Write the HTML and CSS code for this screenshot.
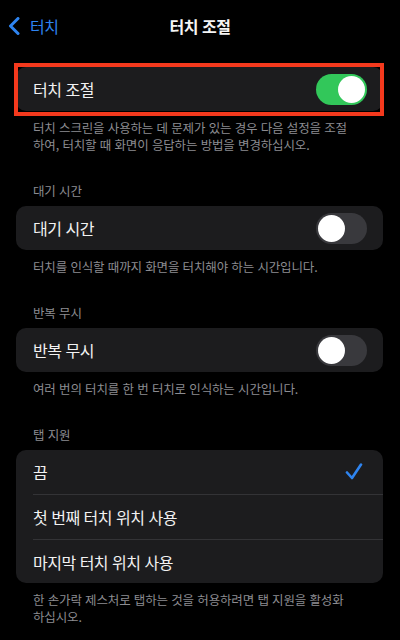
FILE: index.html
```html
<!DOCTYPE html>
<html lang="ko">
<head>
  <meta charset="UTF-8">
  <meta name="viewport" content="width=device-width, initial-scale=1.0">
  <title>터치 조절</title>
  <link rel="stylesheet" href="styles.css">
</head>
<body>
  <div class="screen">
    <header class="navbar">
      <a class="back" href="#">
        <svg width="12" height="18" viewBox="0 0 12 18"><path d="M10 1.5 L2.5 9 L10 16.5" fill="none" stroke="currentColor" stroke-width="3" stroke-linecap="round" stroke-linejoin="round"/></svg>
        <span>터치</span>
      </a>
      <h1 class="title">터치 조절</h1>
      <span></span>
    </header>

    <!-- main switch -->
    <section class="group first">
      <div class="cells highlighted">
        <div class="cell">
          <div class="cell-body">
            <span class="label">터치 조절</span>
            <span class="switch on"><span class="knob"></span></span>
          </div>
        </div>
      </div>
      <p class="footer">터치 스크린을 사용하는 데 문제가 있는 경우 다음 설정을 조절하여, 터치할 때 화면이 응답하는 방법을 변경하십시오.</p>
    </section>

    <section class="group">
      <h2 class="header">대기 시간</h2>
      <div class="cells">
        <div class="cell">
          <div class="cell-body">
            <span class="label">대기 시간</span>
            <span class="switch"><span class="knob"></span></span>
          </div>
        </div>
      </div>
      <p class="footer">터치를 인식할 때까지 화면을 터치해야 하는 시간입니다.</p>
    </section>

    <section class="group">
      <h2 class="header">반복 무시</h2>
      <div class="cells">
        <div class="cell">
          <div class="cell-body">
            <span class="label">반복 무시</span>
            <span class="switch"><span class="knob"></span></span>
          </div>
        </div>
      </div>
      <p class="footer">여러 번의 터치를 한 번 터치로 인식하는 시간입니다.</p>
    </section>

    <section class="group">
      <h2 class="header">탭 지원</h2>
      <div class="cells">
        <div class="cell">
          <div class="cell-body">
            <span class="label">끔</span>
            <svg class="check" width="18" height="18" viewBox="0 0 18 18"><path d="M2 9.5 L7 15 L16 1.5" fill="none" stroke="currentColor" stroke-width="2.6" stroke-linecap="round" stroke-linejoin="round"/></svg>
          </div>
        </div>
        <div class="cell tall">
          <div class="cell-body">
            <span class="label">첫 번째 터치 위치 사용</span>
          </div>
        </div>
        <div class="cell">
          <div class="cell-body">
            <span class="label">마지막 터치 위치 사용</span>
          </div>
        </div>
      </div>
      <p class="footer">한 손가락 제스처로 탭하는 것을 허용하려면 탭 지원을 활성화하십시오.</p>
    </section>
  </div>
</body>
</html>
```

FILE: styles.css
```css
body {
  margin: 0;
  background: #000;
  color: #f2f2f2;
  font-family: "Noto Sans CJK KR", "Noto Sans", sans-serif;
}
.screen {
  width: 400px;
  height: 640px;
  overflow: hidden;
}
.navbar {
  height: 52px;
  display: grid;
  grid-template-columns: 1fr auto 1fr;
  align-items: center;
}
.back {
  display: flex;
  align-items: center;
  gap: 10px;
  padding-left: 8px;
  color: #2e84f0;
  text-decoration: none;
  font-size: 16px;
  letter-spacing: -0.5px;
}
.back svg {
  display: block;
}
.title {
  margin: 0;
  font-size: 16px;
  font-weight: bold;
  letter-spacing: -0.5px;
  color: #f4f4f4;
}
.group {
  margin-top: 29px;
}
.group.first {
  margin-top: 15px;
}
.header {
  margin: 0 0 7px;
  padding: 0 33px;
  font-size: 12.5px;
  font-weight: normal;
  line-height: 17px;
  letter-spacing: -0.15px;
  color: #8c8c91;
}
.cells {
  margin: 0 17px 0 16px;
  background: #1c1c1e;
  border-radius: 10px;
}
.highlighted {
  position: relative;
}
/* red frame drawn on top of the first cell */
.highlighted::after {
  content: "";
  position: absolute;
  top: -4px;
  bottom: -5px;
  left: -2px;
  right: -1px;
  border: 4px solid #f4391d;
}
.cell {
  height: 44px;
  padding-left: 17px;
  display: flex;
}
.cell.tall {
  height: 45px;
}
.cell-body {
  flex: 1;
  display: flex;
  align-items: center;
  justify-content: space-between;
  padding-right: 16px;
}
.cell + .cell .cell-body {
  border-top: 1px solid #333336;
}
.label {
  font-size: 16px;
  letter-spacing: -0.5px;
}
.switch {
  width: 51px;
  height: 31px;
  padding: 2px;
  box-sizing: border-box;
  border-radius: 16px;
  background: #39393d;
  display: flex;
  justify-content: flex-start;
  align-items: center;
}
.switch.on {
  background: #32c75a;
  justify-content: flex-end;
}
.knob {
  width: 27px;
  height: 27px;
  border-radius: 50%;
  background: #fff;
}
.check {
  color: #2e84f0;
  margin-right: 4px;
}
.footer {
  margin: 0;
  padding: 8px 50px 0 33px;
  font-size: 12.5px;
  line-height: 17px;
  letter-spacing: -0.15px;
  color: #8c8c91;
}
```
